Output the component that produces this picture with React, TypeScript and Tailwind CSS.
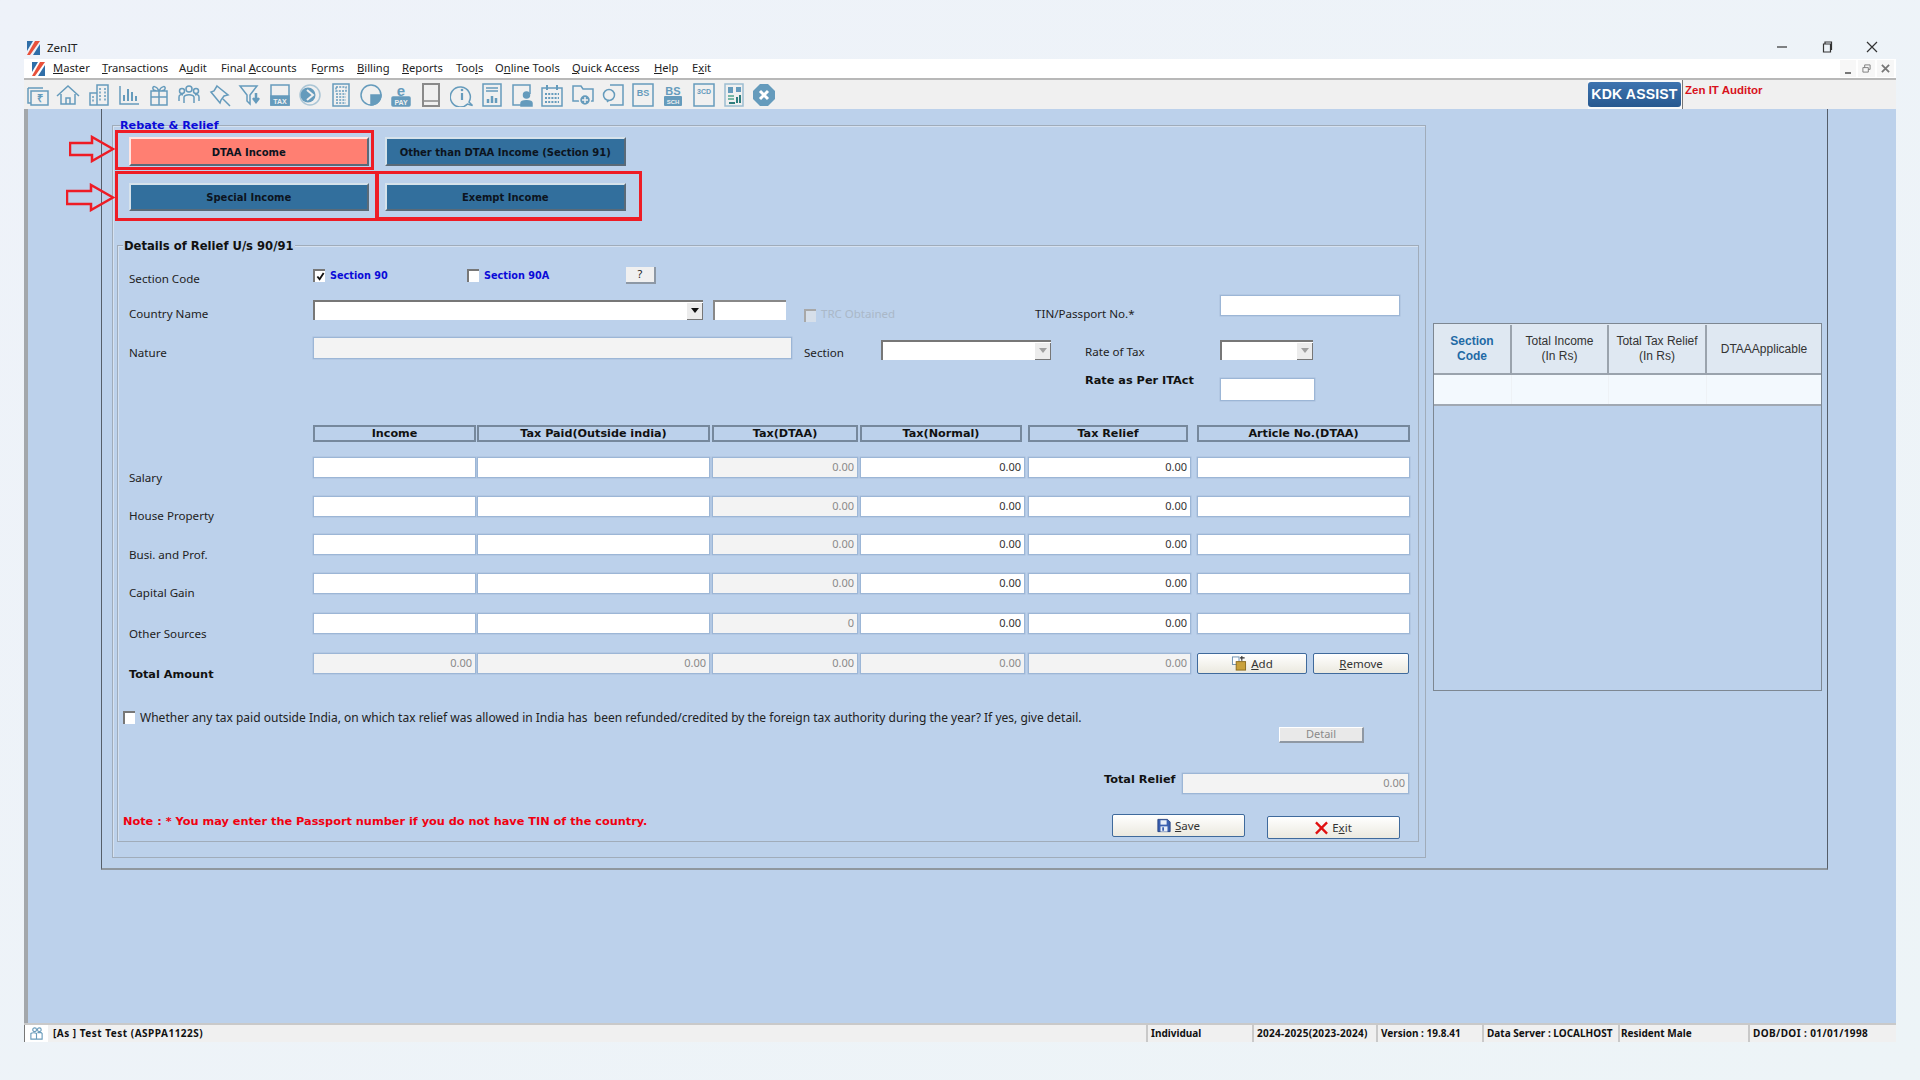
import React from "react";

const I = ({ children, c = "text-[#659bbc]" }: { children: React.ReactNode; c?: string }) => (
  <svg viewBox="0 0 24 24" className={`w-[24px] h-[24px] shrink-0 ${c}`} fill="none" stroke="currentColor" strokeWidth="1.5">
    {children}
  </svg>
);

const txt = { fill: "currentColor", stroke: "none", fontFamily: "Liberation Sans, sans-serif", fontWeight: 700, textAnchor: "middle" as const };

const toolbarIcons = [
  <I key="1"><path d="M2 5h15M2 5v15h3M5 8h17v14H5z" /><text x="13.5" y="19" fontSize="11" {...txt}>₹</text></I>,
  <I key="2"><path d="M1 13 12 3l11 10M5 11v10h14V11M10 21v-6h4v6" /></I>,
  <I key="3"><path d="M10 2h11v20H10zM3 10h7v12H3z" /><path d="M13 5v14M18 5v14M6 13v6" strokeDasharray="2 1.5" /></I>,
  <I key="4"><path d="M3 3v18h19" /><path d="M7 18v-6M11 18V6M15 18v-9M19 18v-5" strokeWidth="2" /></I>,
  <I key="5"><path d="M4 8h16v14H4zM4 14h16M12 8v14M12 8C9 2 5 3 6 6c.5 1.500 3 2 6 2 3 0 5.500-.5 6-2 1-3-3-4-6 2z" /></I>,
  <I key="6"><circle cx="12" cy="6" r="3" /><circle cx="5" cy="8" r="2.500" /><circle cx="19" cy="8" r="2.500" /><path d="M7 20v-6c1-3 9-3 10 0v6M2 18v-4c0-2 2-3 4-2M22 18v-4c0-2-2-3-4-2" /></I>,
  <I key="7"><path d="m9 3 11 9-4 1-3 4-1 3L3 9l3-1zM15 16l7 7" /></I>,
  <I key="8"><path d="M2 3h17l-7 9v9l-3-3v-6z" /><path d="M18 10v8M15 15l3 4 3-4" strokeWidth="2.500" /></I>,
  <I key="9"><path d="M3 2h18v20H3z" /><rect x="3" y="13" width="18" height="9" fill="currentColor" /><text x="12" y="21" fontSize="7" {...txt} fill="#f0f0f0">TAX</text></I>,
  <I key="10"><circle cx="12" cy="12" r="10" strokeOpacity="0.5" /><circle cx="10" cy="12" r="7.500" fill="currentColor" stroke="none" /><path d="m9 7 6 5-6 5" stroke="#f0f0f0" strokeWidth="2" /></I>,
  <I key="11"><path d="M4 1h16v22H4z" /><path d="M7 4h10v4H7zM7 11h10M7 14h10M7 17h10M7 20h10" strokeWidth="1.500" strokeDasharray="2 1.200" /></I>,
  <I key="12"><circle cx="12" cy="12" r="10" /><path d="M12 12h10a10 10 0 0 1-10 10z" fill="currentColor" /></I>,
  <I key="13"><text x="12" y="12.500" fontSize="15" {...txt}>e</text><rect x="3" y="14" width="18" height="9" rx="1" fill="currentColor" /><text x="12" y="21.500" fontSize="7" {...txt} fill="#f0f0f0">PAY</text></I>,
  <I key="14" c="text-[#8a8a8a]"><path d="M4 1h16v22H4z" strokeWidth="2" /><path d="M4 18h16" /></I>,
  <I key="15"><path d="M19 19l3.500 3.500-5-1.500A10 10 0 1 1 19 19z" /><circle cx="12" cy="7" r="1.300" fill="currentColor" stroke="none" /><path d="M12 10v7" strokeWidth="2.200" /></I>,
  <I key="16"><path d="M3 1h18v22H3zM6 5h12M6 8h12" /><path d="M8 20v-4M12 20v-7M16 20v-5" strokeWidth="2.500" /></I>,
  <I key="17"><path d="M11 22H3V2h17v9" /><circle cx="16.500" cy="12" r="3" fill="currentColor" /><path d="M11 23v-3c0-3 11-3 11 0v3z" fill="currentColor" /></I>,
  <I key="18"><path d="M2 5h20v18H2z" /><path d="M7 2v5M17 2v5" strokeWidth="2" /><path d="M5 11h14M5 15h14M5 19h14" strokeDasharray="2 1.200" strokeWidth="2" /></I>,
  <I key="19"><path d="M2 3h8l2 3h10v12H2z" /><circle cx="14" cy="17" r="5.500" fill="currentColor" stroke="#f0f0f0" /><path d="M14 14v6M11 17h6" stroke="#f0f0f0" /></I>,
  <I key="20"><path d="M9 2h13v20H9" /><circle cx="8" cy="12" r="5.500" /><path d="M6 19l2-2" /></I>,
  <I key="21"><path d="M2 1h20v22H2z" /><text x="12" y="13" fontSize="9" {...txt}>BS</text></I>,
  <I key="22"><rect x="3" y="13" width="18" height="10" rx="1" fill="currentColor" stroke="none" /><text x="12" y="12" fontSize="11" {...txt}>BS</text><text x="12" y="21" fontSize="6" {...txt} fill="#f0f0f0">SCH</text></I>,
  <I key="23"><path d="M2 1h20v22H2z" /><text x="12" y="11" fontSize="7" {...txt}>3CD</text></I>,
  <I key="24"><path d="M3 1h18v22H3z" strokeOpacity="0.6" /><path d="M6 4h5v6H6zM14 4h5v5h-5z" fill="currentColor" stroke="none" /><path d="M6 13h6M6 16h6" stroke="#4fa58d" /><path d="M15 20v-6M18 20v-8M7 20h6" stroke="#2f7d7d" strokeWidth="2" /></I>,
  <I key="25"><path d="M8 1h8l7 7v8l-7 7H8l-7-7V8z" fill="currentColor" stroke="none" /><path d="m8 8 8 8M16 8l-8 8" stroke="#fff" strokeWidth="3" /></I>,
];

const Logo = () => (
  <svg viewBox="0 0 14 14" className="w-[14px] h-[14px] shrink-0">
    <path d="M0 0h6L0 10z" fill="#2f6ea8" />
    <path d="M8 0h5L3 14H0z" fill="#e8503a" />
    <path d="M13 3v11H6z" fill="#2f6ea8" />
  </svg>
);

const menu: [React.ReactNode, string][] = [
  [<><u>M</u>aster</>, "w-[49px]"],
  [<><u>T</u>ransactions</>, "w-[77px]"],
  [<>A<u>u</u>dit</>, "w-[42px]"],
  [<>Final <u>A</u>ccounts</>, "w-[90px]"],
  [<>F<u>o</u>rms</>, "w-[46px]"],
  [<><u>B</u>illing</>, "w-[45px]"],
  [<><u>R</u>eports</>, "w-[54px]"],
  [<>Too<u>l</u>s</>, "w-[39px]"],
  [<>O<u>n</u>line Tools</>, "w-[77px]"],
  [<><u>Q</u>uick Access</>, "w-[82px]"],
  [<><u>H</u>elp</>, "w-[38px]"],
  [<>E<u>x</u>it</>, "w-[30px]"],
];

const Label = ({ children, className = "" }: { children: React.ReactNode; className?: string }) => (
  <div className={`text-[11.6px] leading-[16px] text-[#222] whitespace-nowrap ${className}`}>{children}</div>
);
const BoldLabel = ({ children, className = "" }: { children: React.ReactNode; className?: string }) => (
  <div className={`font-[DejaVu_Sans,sans-serif] font-bold text-[11.3px] leading-[18px] text-[#111] whitespace-nowrap ${className}`}>{children}</div>
);

const Box = ({ className = "", value, disabled }: { className?: string; value?: string; disabled?: boolean }) => (
  <div
    className={`border border-[#9cb6d6] shadow-[0_0_0_0.5px_#a9c0dc] flex items-center justify-end pr-[3px] text-[11px] ${disabled ? "bg-[#f3f3f3] text-[#8a8a8a]" : "bg-white text-[#333]"} ${className}`}
  >
    {value}
  </div>
);

const Check = ({ checked, disabled, className = "" }: { checked?: boolean; disabled?: boolean; className?: string }) => (
  <div className={`w-[12px] h-[13px] shrink-0 border-t-2 border-l-2 ${disabled ? "border-[#a8a8a8] bg-[#d6dfea]" : "border-[#777] bg-white"} flex items-center justify-center ${className}`}>
    {checked && (
      <svg viewBox="0 0 10 10" className="w-[9px] h-[9px]" fill="none" stroke="#111" strokeWidth="2">
        <path d="m1.500 5 2.500 3 4.500-7" />
      </svg>
    )}
  </div>
);

const Combo = ({ className = "", dim }: { className?: string; dim?: boolean }) => (
  <div className={`h-[20px] bg-white border-t-2 border-l-2 border-t-[#777] border-l-[#777] flex justify-end items-center ${className}`}>
    <div className="w-[16px] h-[17px] bg-[#ececec] border-r border-b border-[#777] flex items-center justify-center">
      <div className={`w-0 h-0 border-l-[4px] border-r-[4px] border-t-[5px] border-l-transparent border-r-transparent ${dim ? "border-t-[#a0a0a0]" : "border-t-[#111]"}`} />
    </div>
  </div>
);

const Btn = ({ children, className = "" }: { children: React.ReactNode; className?: string }) => (
  <div className={`border-[1.5px] border-[#3f6a9c] rounded-[2px] bg-gradient-to-b from-white to-[#ebe9df] flex items-center justify-center gap-[4px] text-[11.5px] text-[#333] shrink-0 ${className}`}>
    {children}
  </div>
);

const AppBtn = ({ children, className = "" }: { children: React.ReactNode; className?: string }) => (
  <div className={`border-t-2 border-l-2 border-white/80 border-r-2 border-b-2 border-r-[#5a6a78] border-b-[#5a6a78] flex items-center justify-center pt-[1px] font-[DejaVu_Sans,sans-serif] font-bold text-[10px] text-[#0c1420] ${className}`}>
    {children}
  </div>
);

const rows = [
  { label: "Salary", lm: "mt-[13px]", v: "0.00" },
  { label: "House Property", lm: "mt-[12px]", v: "0.00" },
  { label: "Busi. and Prof.", lm: "mt-[13px]", v: "0.00" },
  { label: "Capital Gain", lm: "mt-[12px]", v: "0.00" },
  { label: "Other Sources", lm: "mt-[13px]", v: "0" },
];

const Head = ({ children, className = "" }: { children: React.ReactNode; className?: string }) => (
  <div className={`h-[17px] border-2 border-[#76889c] flex items-center justify-center font-[DejaVu_Sans,sans-serif] font-bold text-[11.2px] leading-[15px] text-[#111] whitespace-nowrap ${className}`}>
    {children}
  </div>
);

export default function App() {
  return (
    <div className="w-[1920px] h-[1080px] overflow-hidden relative bg-gradient-to-br from-[#eef2f9] to-[#edf4f7] px-[24px] font-[Noto_Sans,sans-serif]">
      {/* title bar */}
      <div className="h-[59px] pt-[41px] flex items-start">
        <div className="flex items-center h-[14px] ml-[3px]">
          <Logo />
          <span className="ml-[6px] text-[11.5px] text-[#222]">ZenIT</span>
        </div>
        <div className="ml-auto mr-[18px] flex items-center gap-[33px] h-[12px]">
          <svg viewBox="0 0 12 12" className="w-[12px] h-[12px]" stroke="#333" strokeWidth="1.200"><path d="M1 6h10" /></svg>
          <svg viewBox="0 0 12 12" className="w-[12px] h-[12px]" stroke="#333" fill="none" strokeWidth="1.200"><path d="M2.500 3h7v8h-7zM4 3V1h6.500v8" /></svg>
          <svg viewBox="0 0 12 12" className="w-[12px] h-[12px]" stroke="#333" strokeWidth="1.200"><path d="m1 1 10 10M11 1 1 11" /></svg>
        </div>
      </div>

      {/* menu */}
      <div className="h-[21px] bg-white border-b-2 border-[#b8b8b8] flex items-center pl-[8px] text-[11.2px] text-[#222]">
        <Logo />
        <div className="ml-[7px] flex">
          {menu.map(([t, w], i) => (
            <div key={i} className={`${w} whitespace-nowrap`}>{t}</div>
          ))}
        </div>
        <div className="ml-auto mr-[2px] flex gap-[2px] text-[#666]">
          <div className="w-[16px] h-[17px] bg-[#f7f7f7] flex items-end justify-center pb-[3px]"><div className="w-[6px] h-[2px] bg-[#777]" /></div>
          <div className="w-[17px] h-[17px] bg-[#f7f7f7] flex items-center justify-center">
            <svg viewBox="0 0 10 10" className="w-[9px] h-[9px]" stroke="#777" fill="none"><path d="M1 4h6v5H1zM3 4V1h6v5H7" /></svg>
          </div>
          <div className="w-[17px] h-[17px] bg-[#f7f7f7] flex items-center justify-center">
            <svg viewBox="0 0 10 10" className="w-[9px] h-[9px]" stroke="#777" strokeWidth="2"><path d="m1 1 8 8M9 1 1 9" /></svg>
          </div>
        </div>
      </div>

      {/* toolbar */}
      <div className="h-[29px] bg-[#f0f0f0] flex items-center pl-[2px]">
        <div className="flex items-center gap-[6.25px]">{toolbarIcons}</div>
        <div className="ml-auto w-[308px] h-full flex items-stretch">
          <div className="w-[95px] bg-[#fafafa] border-r border-[#777] flex items-center">
            <div className="w-[93px] h-[25px] rounded-[3px] bg-gradient-to-b from-[#3e74b0] to-[#27588f] flex items-center justify-center font-[Liberation_Sans,sans-serif] font-bold text-[14px] text-white tracking-[0.2px] whitespace-nowrap">
              KDK ASSIST
            </div>
          </div>
          <div className="ml-[2px] mt-[2px] font-[Liberation_Sans,sans-serif] font-bold text-[11.5px] leading-[16px] text-[#d8121c] whitespace-nowrap">Zen IT Auditor</div>
        </div>
      </div>

      {/* main */}
      <div className="h-[914px] bg-[#bcd1eb] flex border-l-4 border-[#a3a7ab]">
        <div className="ml-[73px] w-[1727px] h-[761px] border-l border-r border-[#555e69] border-b-2 border-b-[#8f979f] flex">
          {/* Rebate & Relief group */}
          <div className="relative ml-[10px] mt-[16px] w-[1314px] h-[733px] border border-[#a0acba] shadow-[inset_1px_1px_0_#d5e1f0] shrink-0">
            <div className="absolute left-[7px] -top-[9px] font-[DejaVu_Sans,sans-serif] font-bold text-[11.2px] leading-[18px] text-[#0a0ad8] whitespace-nowrap">Rebate &amp; Relief</div>

            <div className="ml-[15.500px] mt-[11px] grid grid-cols-[240.500px_240.500px] grid-rows-[29px_28px] gap-x-[16px] gap-y-[17px] w-fit">
              <AppBtn className="bg-[#ff7f72]">DTAA Income</AppBtn>
              <AppBtn className="bg-[#326f9d]">Other than DTAA Income (Section 91)</AppBtn>
              <AppBtn className="bg-[#326f9d]">Special Income</AppBtn>
              <AppBtn className="bg-[#326f9d]">Exempt Income</AppBtn>
            </div>

            {/* Details fieldset */}
            <div className="relative ml-[4px] mt-[34px] w-[1302px] h-[597px] border border-[#a0acba] shadow-[inset_1px_1px_0_#d5e1f0]">
              <div className="absolute left-[5px] -top-[8px] px-[1px] bg-[#bcd1eb] font-[DejaVu_Sans,sans-serif] font-bold text-[11.6px] leading-[16px] text-[#111] whitespace-nowrap">Details of Relief U/s 90/91</div>

              {/* Section code row */}
              <div className="mt-[20px] h-[29px] flex items-start pl-[11px]">
                <Label className="w-[184px] mt-[5px]">Section Code</Label>
                <Check checked className="mt-[3px]" />
                <BoldLabel className="ml-[5px] mt-[1px] w-[137px] !text-[#0a0ad8] !text-[9.7px]">Section 90</BoldLabel>
                <Check className="mt-[3px]" />
                <BoldLabel className="ml-[5px] mt-[1px] w-[142px] !text-[#0a0ad8] !text-[9.7px]">Section 90A</BoldLabel>
                <div className="mt-[1px] w-[30px] h-[17px] bg-[#f0f0f0] border-b-2 border-r-2 border-[#8d98a5] flex items-center justify-center text-[11px] text-[#222]">?</div>
              </div>

              {/* Country row */}
              <div className="h-[41px] flex items-start pl-[11px]">
                <Label className="w-[184px] mt-[11px]">Country Name</Label>
                <Combo className="mt-[5px] w-[390px]" />
                <div className="ml-[10px] mt-[5px] w-[73px] h-[20px] bg-white border-t-2 border-l-2 border-[#888]" />
                <Check disabled className="ml-[18px] mt-[14px]" />
                <div className="ml-[5px] mt-[11px] w-[214px] text-[11.5px] leading-[16px] text-[#aab8c8] whitespace-nowrap">TRC Obtained</div>
                <Label className="mt-[11px] w-[185px]">TIN/Passport No.*</Label>
                <Box className="w-[180px] h-[21px]" />
              </div>

              {/* Nature row */}
              <div className="h-[36px] flex items-start pl-[11px]">
                <Label className="w-[184px] mt-[9px]">Nature</Label>
                <Box disabled className="w-[479px] h-[22px] mt-[1px]" />
                <Label className="ml-[12px] w-[77px] mt-[9px]">Section</Label>
                <Combo dim className="mt-[4px] w-[170px]" />
                <Label className="ml-[34px] w-[135px] mt-[8px]">Rate of Tax</Label>
                <Combo dim className="mt-[4px] w-[93px]" />
              </div>

              {/* Rate row */}
              <div className="h-[53px] flex items-start pl-[967px]">
                <BoldLabel className="w-[135px]">Rate as Per ITAct</BoldLabel>
                <Box className="w-[95px] h-[23px] mt-[6px]" />
              </div>

              {/* table */}
              <div className="grid grid-cols-[195px_164px_235px_148px_168px_169px_213px] grid-rows-[32px_39px_38px_39px_40px_40px_40px] items-start">
                <div />
                <Head className="w-[163px]">Income</Head>
                <Head className="w-[233px]">Tax Paid(Outside india)</Head>
                <Head className="w-[146px]">Tax(DTAA)</Head>
                <Head className="w-[162px]">Tax(Normal)</Head>
                <Head className="w-[160px]">Tax Relief</Head>
                <Head className="w-[213px]">Article No.(DTAA)</Head>

                {rows.map((r) => (
                  <React.Fragment key={r.label}>
                    <Label className={`pl-[11px] ${r.lm}`}>{r.label}</Label>
                    <Box className="w-[163px] h-[21px]" />
                    <Box className="w-[233px] h-[21px]" />
                    <Box disabled className="w-[146px] h-[21px]" value={r.v} />
                    <Box className="w-[165px] h-[21px]" value="0.00" />
                    <Box className="w-[163px] h-[21px]" value="0.00" />
                    <Box className="w-[213px] h-[21px]" />
                  </React.Fragment>
                ))}

                <BoldLabel className="pl-[11px] mt-[13px]">Total Amount</BoldLabel>
                <Box disabled className="w-[163px] h-[21px]" value="0.00" />
                <Box disabled className="w-[233px] h-[21px]" value="0.00" />
                <Box disabled className="w-[146px] h-[21px]" value="0.00" />
                <Box disabled className="w-[165px] h-[21px]" value="0.00" />
                <Box disabled className="w-[163px] h-[21px]" value="0.00" />
                <div className="flex gap-[6px]">
                  <Btn className="w-[110px] h-[21px]">
                    <svg viewBox="0 0 16 16" className="w-[16px] h-[15px]">
                      <rect x="1" y="1" width="7" height="8" fill="#fff" stroke="#6b8fb0" />
                      <rect x="5" y="6" width="10" height="9" fill="#c9a13b" stroke="#8a6a1e" />
                      <path d="M11 0v5M9 2h5" stroke="#333" strokeWidth="1.200" />
                    </svg>
                    <span><u>A</u>dd</span>
                  </Btn>
                  <Btn className="w-[96px] h-[21px]"><span><u>R</u>emove</span></Btn>
                </div>
              </div>

              {/* whether row */}
              <div className="mt-[18px] h-[13px] flex items-center pl-[5px]">
                <Check />
                <div className="ml-[5px] text-[12.03px] leading-[16px] text-[#222] whitespace-pre">Whether any tax paid outside India, on which tax relief was allowed in India has  been refunded/credited by the foreign tax authority during the year? If yes, give detail.</div>
              </div>

              {/* detail */}
              <div className="mt-[3px] ml-[1161px] w-[85px] h-[16px] bg-[#e9e9e9] border-t border-l border-white border-b-2 border-r-2 border-b-[#8f98a3] border-r-[#8f98a3] flex items-center justify-center text-[11px] text-[#8a8a8a]">Detail</div>

              {/* total relief */}
              <div className="mt-[30px] ml-[986px] flex items-start">
                <BoldLabel className="w-[78px] -mt-[2px]">Total Relief</BoldLabel>
                <Box disabled className="w-[227px] h-[21px]" value="0.00" />
              </div>

              {/* bottom */}
              <div className="mt-[19px] flex items-start pl-[5px]">
                <div className="w-[989px] font-[DejaVu_Sans,sans-serif] font-bold text-[11.3px] leading-[18px] text-[#f00010] whitespace-nowrap">Note : * You may enter the Passport number if you do not have TIN of the country.</div>
                <Btn className="w-[133px] h-[23px] mt-[1px]">
                  <svg viewBox="0 0 16 16" className="w-[14px] h-[15px]">
                    <path d="M1 1h11l3 3v11H1z" fill="#3a5fb0" stroke="#23407f" />
                    <rect x="4" y="2" width="7" height="5" fill="#e8eef8" />
                    <rect x="4" y="9" width="8" height="6" fill="#e8eef8" />
                    <rect x="6" y="10" width="2" height="4" fill="#3a5fb0" />
                  </svg>
                  <span><u>S</u>ave</span>
                </Btn>
                <Btn className="ml-[22px] w-[133px] h-[23px] mt-[3px]">
                  <svg viewBox="0 0 14 14" className="w-[13px] h-[14px]" stroke="#e01010" strokeWidth="2.500"><path d="m1 1 12 12M13 1 1 13" /></svg>
                  <span>E<u>x</u>it</span>
                </Btn>
              </div>
            </div>
          </div>

          {/* right grid */}
          <div className="ml-[7px] mt-[214px] w-[389px] h-[368px] border border-[#7d8792] shrink-0 font-[Liberation_Sans,sans-serif] text-[12px] leading-[15px] text-[#333]">
            <div className="h-[51px] pt-[1px] bg-[#dfe8f2] border-b-2 border-[#9aa3ad] grid grid-cols-[78px_97px_98px_1fr] text-center">
              <div className="flex items-center justify-center font-bold text-[#1f6aa5] border-r-2 border-[#9aa3ad]">Section<br />Code</div>
              <div className="flex items-center justify-center border-r-2 border-[#9aa3ad]">Total Income<br />(In Rs)</div>
              <div className="flex items-center justify-center border-r-2 border-[#9aa3ad]">Total Tax Relief<br />(In Rs)</div>
              <div className="flex items-center justify-center">DTAAApplicable</div>
            </div>
            <div className="h-[31px] bg-[#f3f9fe] border-b-2 border-[#a0a8b2] grid grid-cols-[78px_97px_98px_1fr]">
              <div className="border-r border-[#eef2f6]" />
              <div className="border-r border-[#eef2f6]" />
              <div className="border-r border-[#eef2f6]" />
              <div />
            </div>
          </div>
        </div>
      </div>

      {/* status bar */}
      <div className="h-[19px] bg-[#f0f0f0] border-t-2 border-[#c9c9c9] flex items-center font-bold text-[10px] text-[#111] whitespace-nowrap">
        <div className="w-[24px] h-full bg-white border-l border-[#777] flex items-center justify-center">
          <svg viewBox="0 0 16 16" className="w-[15px] h-[15px]" fill="none" stroke="#6a9cbb" strokeWidth="1.200"><circle cx="6" cy="4" r="2" /><circle cx="11" cy="4" r="2" /><path d="M2 14V8c1-1 5-1 6 0v6zM9 7h4l1 1v6H8" /></svg>
        </div>
        <div className="w-[1098px] pl-[5px] tracking-[0.5px]">[As ] Test Test (ASPPA1122S)</div>
        <div className="w-[104px] h-full pl-[3px] border-l-2 border-[#c9c9c9] flex items-center">Individual</div>
        <div className="ml-[2px] w-[122px] h-full pl-[3px] border-l-2 border-[#c9c9c9] flex items-center tracking-[0.3px]">2024-2025(2023-2024)</div>
        <div className="ml-[2px] w-[104px] h-full pl-[3px] border-l-2 border-[#c9c9c9] flex items-center">Version : 19.8.41</div>
        <div className="ml-[2px] w-[134px] h-full pl-[3px] border-l-2 border-[#c9c9c9] flex items-center">Data Server : LOCALHOST</div>
        <div className="ml-[2px] w-[128px] h-full pl-[1px] border-l-2 border-[#c9c9c9] flex items-center">Resident Male</div>
        <div className="ml-[2px] w-[129px] h-full pl-[3px] border-l-2 border-[#c9c9c9] flex items-center tracking-[0.4px]">DOB/DOI : 01/01/1998</div>
      </div>

      {/* annotations drawn over the screenshot */}
      <div className="absolute left-[115px] top-[130px] w-[259px] h-[40px] border-[3px] border-[#ee1c25] pointer-events-none" />
      <div className="absolute left-[115px] top-[171px] w-[263px] h-[50px] border-[3px] border-[#ee1c25] pointer-events-none" />
      <div className="absolute left-[376px] top-[171px] w-[266px] h-[50px] border-[3px] border-[#ee1c25] border-b-4 pointer-events-none" />
      <svg viewBox="0 0 46 28" className="absolute left-[69px] top-[135px] w-[46px] h-[28px]" fill="none" stroke="#ee1c25" strokeWidth="2.500">
        <path d="M1 8h22V2l21 12-21 12v-6H1z" />
      </svg>
      <svg viewBox="0 0 49 29" className="absolute left-[66px] top-[183px] w-[49px] h-[29px]" fill="none" stroke="#ee1c25" strokeWidth="2.500">
        <path d="M1 8h24V2l22 12.500L25 27v-6H1z" />
      </svg>
    </div>
  );
}
